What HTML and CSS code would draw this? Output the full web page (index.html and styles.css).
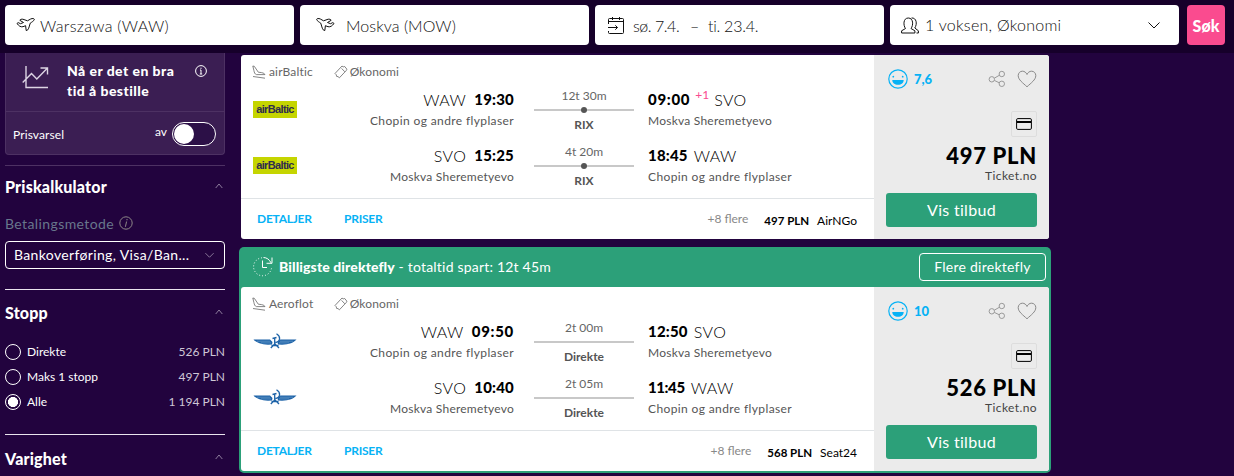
FILE: index.html
```html
<!DOCTYPE html>
<html lang="no">
<head>
<meta charset="utf-8">
<title>Warszawa – Moskva</title>
<link rel="stylesheet" href="styles.css">
</head>
<body>
<svg class="defs" width="0" height="0">
  <symbol id="i-plane" viewBox="0 0 20 16"><path d="M1 6.500 2.200 5.600 4.500 6.700 7.500 5.500 3.800 3.300 Q4.800 1.800 6.800 2.200L11.500 3.800 14.300 2.200C16 1.200 18.600 1.300 18.300 2.600 18 3.800 15.600 5.300 14.300 6.100 13.300 8.500 13.200 11.500 11.300 13.300L10.200 13.500 9.600 8.700 7 9.700C4.500 10.300 2.800 8.800 1 6.500Z"/></symbol>
  <symbol id="i-land" viewBox="0 0 14 14"><path d="M.8 1 2.300 1.300 6.300 7.200 9.500 7.600C11.500 8 12.900 8.800 12.900 9.600H4.500C2.800 9.200 2.300 7.500 1.900 5.500ZM1 11.500 13 13.200"/></symbol>
  <symbol id="i-ticket" viewBox="0 0 14 14"><path d="M1 8.500 8 1 9.200 1.900 10.700 1.500 12.900 4.200 12.200 5.600 5.400 12.800 4 11.600 2.600 11.400 2.300 9.800ZM7.600 3.400 10.800 6.800" /></symbol>
  <symbol id="i-face" viewBox="0 0 20 20"><circle cx="10" cy="10" r="9.200"/><path class="fill" d="M4.300 11h11.400c0 3-2.300 4.800-5.700 4.800S4.300 14 4.300 11Z"/><circle class="fill" cx="5.300" cy="7.700" r=".9"/><circle class="fill" cx="14.700" cy="7.700" r=".9"/></symbol>
  <symbol id="i-share" viewBox="0 0 18 18"><circle cx="3.800" cy="9.300" r="2.700"/><circle cx="13.800" cy="4" r="2.700"/><circle cx="13.800" cy="13.800" r="2.700"/><path d="M6.300 8.200 11.300 5.300M6.300 10.400 11.300 12.800"/></symbol>
  <symbol id="i-heart" viewBox="0 0 20 18"><path d="M10 16.800C6 13 1.200 9.800 1.200 5.600 1.200 3 3.100 1.200 5.400 1.200 7.500 1.200 9.200 2.500 10 4.500 10.800 2.500 12.500 1.200 14.600 1.200 16.900 1.200 18.800 3 18.800 5.600 18.800 9.800 14 13 10 16.800Z"/></symbol>
  <symbol id="i-up" viewBox="0 0 8 6"><path d="M.7 5 4 1 7.300 5"/></symbol>
  <symbol id="i-down" viewBox="0 0 12 8"><path d="M.5 1.500 6 7 11.500 1.500"/></symbol>
  <symbol id="i-card" viewBox="0 0 16 12"><rect x=".6" y=".6" width="14.800" height="10.800" rx="1.200"/><path d="M1 4h14" stroke-width="1.800"/></symbol>
  <symbol id="i-aeroflot" viewBox="0 0 44 16"><path d="M.5 6.500H17L19.500 9 19 11.500 15 11.800C8 11.500 3 9.500 .5 6.500ZM43.500 6.500H27L24.500 9 25 11.500 29 11.800C36 11.500 41 9.500 43.500 6.500Z"/><path class="wing" d="M4 8.200H17M8 9.900H18M40 8.200H27M36 9.900H26"/><path class="tool" d="M23.500 .8C28 3.500 27.500 8.500 22.500 9.500M19.500 5.500 23.500 4.500M21.700 5V11L17.800 15M22 11 26 15M18.500 12.500H25.500"/></symbol>
</svg>

<header class="search">
  <div class="field origin"><svg class="icon plane"><use href="#i-plane"/></svg><span class="t-origin">Warszawa (WAW)</span></div>
  <div class="field dest"><svg class="icon plane flip"><use href="#i-plane"/></svg><span class="t-dest">Moskva (MOW)</span></div>
  <div class="field dates">
    <svg class="icon cal" viewBox="0 0 16 17"><path d="M.5 7V2.500q0-1 1-1h13q1 0 1 1v13q0 1-1 1h-13q-1 0-1-1V14M.5 4.500h15M4.500 0v3M11.500 0v3M0 10.500h9.500M7.300 8.300l2.200 2.200-2.200 2.200"/></svg>
    <span class="t-date">sø. 7.4.</span><span class="dash">–</span><span class="t-date2">ti. 23.4.</span>
  </div>
  <div class="field pax">
    <svg class="icon people" viewBox="0 0 18 17"><path d="M.6 16V13.800L4.500 11.500C2.200 8.500 2 1 7.300 1S12.400 8.500 10 11.500L13.900 13.800V16ZM10.500 1C15.500 .5 16.500 7 13.800 11L17.400 13.800V16H15.500"/></svg>
    <span class="t-pax">1 voksen, Økonomi</span><svg class="icon chev"><use href="#i-down"/></svg>
  </div>
  <button class="go">Søk</button>
</header>

<main class="page">
  <aside class="side">
    <section class="advice">
      <div class="advice-top">
        <svg class="trend" viewBox="0 0 27 24"><path d="M4 1V22.500H26M.7 17.500 9.500 8.500 14.800 14 25 3.500M18.500 3H25.500V9.500"/></svg>
        <p class="advice-text">Nå er det en bra<br>tid å bestille</p>
        <svg class="info" viewBox="0 0 12 12"><circle cx="6" cy="6" r="5.400"/><path d="M6 5v4M6 2.700v1.200M5 5h1M4.800 9h2.400"/></svg>
      </div>
      <div class="advice-bottom"><span class="alert">Prisvarsel</span><span class="off">av</span><span class="toggle"><i></i></span></div>
    </section>
    <section class="block calc">
      <h2><span class="h-calc">Priskalkulator</span><svg class="up"><use href="#i-up"/></svg></h2>
      <div class="pay-label"><span>Betalingsmetode</span><svg class="info2" viewBox="0 0 14 14"><circle cx="7" cy="7" r="6.200"/><path d="M7.600 5.500 6.400 10.800M8 3v1.300"/></svg></div>
      <div class="select"><span>Bankoverføring, Visa/Ban...</span><svg class="down"><use href="#i-down"/></svg></div>
    </section>
    <section class="block stops">
      <h2><span class="h-stop">Stopp</span><svg class="up"><use href="#i-up"/></svg></h2>
      <ul>
        <li><i class="radio"></i><span class="o1">Direkte</span><b>526 PLN</b></li>
        <li><i class="radio"></i><span class="o2">Maks 1 stopp</span><b>497 PLN</b></li>
        <li><i class="radio on"></i><span class="o3">Alle</span><b>1 194 PLN</b></li>
      </ul>
    </section>
    <section class="block"><h2><span class="h-dur">Varighet</span><svg class="up"><use href="#i-up"/></svg></h2></section>
  </aside>

  <div class="results">
    <article class="card">
      <div class="trip">
        <div class="body">
          <div class="meta"><svg class="m1"><use href="#i-land"/></svg><span class="carrier">airBaltic</span><svg class="m2"><use href="#i-ticket"/></svg><span class="cabin">Økonomi</span></div>
          <div class="leg">
            <div class="baltic">airBaltic</div>
            <div class="dep"><p class="time"><span>WAW</span><b>19:30</b></p><p class="place chopin">Chopin og andre flyplaser</p></div>
            <div class="mid"><span class="dur">12t 30m</span><div class="line"><i></i></div><b class="via">RIX</b></div>
            <div class="arr"><p class="time"><b class="wide">09:00</b><sup>+1</sup><span>SVO</span></p><p class="place">Moskva Sheremetyevo</p></div>
          </div>
          <div class="leg">
            <div class="baltic">airBaltic</div>
            <div class="dep"><p class="time"><span>SVO</span><b>15:25</b></p><p class="place">Moskva Sheremetyevo</p></div>
            <div class="mid"><span class="dur">4t 20m</span><div class="line"><i></i></div><b class="via">RIX</b></div>
            <div class="arr"><p class="time"><b>18:45</b><span>WAW</span></p><p class="place chopin">Chopin og andre flyplaser</p></div>
          </div>
        </div>
        <div class="foot"><a class="det">DETALJER</a><a>PRISER</a><span class="more">+8 flere</span><b>497 PLN</b><span class="agent">AirNGo</span></div>
      </div>
      <div class="offer">
        <div class="rate"><svg class="face"><use href="#i-face"/></svg><b>7,6</b><svg class="share"><use href="#i-share"/></svg><svg class="heart"><use href="#i-heart"/></svg></div>
        <div class="cc"><svg><use href="#i-card"/></svg></div>
        <strong class="price">497 PLN</strong><span class="seller">Ticket.no</span>
        <button class="view">Vis tilbud</button>
      </div>
    </article>

    <div class="promo">
      <div class="promo-head">
        <svg class="clock" viewBox="0 0 22 22"><path class="dots" d="M10 1.800A9 9 0 1 0 19.500 12"/><path d="M10.500 4.500V11.500H15M11.500 1.500C14.500 1.500 17.500 3.500 19 6.800M20 1.500V7.300H14.500"/></svg>
        <p><b>Billigste direktefly</b><span> - totaltid spart: 12t 45m</span></p>
        <button>Flere direktefly</button>
      </div>
      <article class="card">
        <div class="trip">
          <div class="body">
            <div class="meta"><svg class="m1"><use href="#i-land"/></svg><span class="carrier">Aeroflot</span><svg class="m2"><use href="#i-ticket"/></svg><span class="cabin">Økonomi</span></div>
            <div class="leg">
              <svg class="aeroflot"><use href="#i-aeroflot"/></svg>
              <div class="dep"><p class="time"><span>WAW</span><b class="wide">09:50</b></p><p class="place chopin">Chopin og andre flyplaser</p></div>
              <div class="mid"><span class="dur">2t 00m</span><div class="line"></div><b class="via">Direkte</b></div>
              <div class="arr"><p class="time"><b>12:50</b><span>SVO</span></p><p class="place">Moskva Sheremetyevo</p></div>
            </div>
            <div class="leg">
              <svg class="aeroflot"><use href="#i-aeroflot"/></svg>
              <div class="dep"><p class="time"><span>SVO</span><b>10:40</b></p><p class="place">Moskva Sheremetyevo</p></div>
              <div class="mid"><span class="dur">2t 05m</span><div class="line"></div><b class="via">Direkte</b></div>
              <div class="arr"><p class="time"><b class="narrow">11:45</b><span>WAW</span></p><p class="place chopin">Chopin og andre flyplaser</p></div>
            </div>
          </div>
          <div class="foot"><a class="det">DETALJER</a><a>PRISER</a><span class="more">+8 flere</span><b>568 PLN</b><span class="agent">Seat24</span></div>
        </div>
        <div class="offer">
          <div class="rate"><svg class="face"><use href="#i-face"/></svg><b>10</b><svg class="share"><use href="#i-share"/></svg><svg class="heart"><use href="#i-heart"/></svg></div>
          <div class="cc"><svg><use href="#i-card"/></svg></div>
          <strong class="price">526 PLN</strong><span class="seller">Ticket.no</span>
          <button class="view">Vis tilbud</button>
        </div>
      </article>
    </div>
  </div>
</main>
</body>
</html>
```
FILE: styles.css
```css
* { box-sizing: border-box; margin: 0; padding: 0; }
html, body { height: 476px; overflow: hidden; }
body { background: #22033e; font-family: Lato, "Open Sans", sans-serif; font-size: 12px; color: #000; }
svg { display: block; flex: none; fill: none; stroke: currentColor; stroke-width: 1; }
.defs { position: absolute; }
button { border: 0; font-family: inherit; }
span, b, p, a { white-space: nowrap; }

/* search bar */
.search { height: 53px; padding: 5px 9px 8px 5px; display: flex; gap: 6px; background: #16002a; }
.field { height: 40px; background: #fff; border-radius: 4px; display: flex; align-items: center; font-size: 16px; font-weight: 300; color: #111; flex: none; }
.icon { color: #111; }
.origin, .dest, .dates, .pax { width: 289px; }
.origin { padding-left: 11px; }
.plane { width: 20px; height: 16px; }
.t-origin { margin-left: 4px; letter-spacing: .3px; }
.dest { padding-left: 15px; }
.t-dest { margin-left: 11px; letter-spacing: .05px; }
.plane.flip { transform: scaleX(-1); }
.dates { padding-left: 13px; }
.cal { width: 16px; height: 17px; }
.t-date { margin-left: 9px; width: 48px; letter-spacing: -.45px; }
.t-date2 { letter-spacing: -.25px; }
.dash { margin-left: 9px; width: 18px; }
.pax { padding-left: 11px; }
.people { width: 18px; height: 17px; }
.t-pax { margin-left: 6px; padding-bottom: 2px; letter-spacing: .25px; }
.chev { width: 12px; height: 8px; margin: 0 19px 0 auto; }
.go { width: 38px; height: 40px; margin-left: 2px; border-radius: 4px; background: #fa4b8f; color: #fff; font-size: 16px; font-weight: 900; }

.page { display: flex; }

/* filters */
.side { width: 220px; margin-left: 5px; color: #fff; flex: none; }
.advice { height: 102px; background: #3b1e53; border: 1px solid #4d3163; border-top: 0; border-radius: 0 0 4px 4px; margin-bottom: 10px; }
.advice-top { height: 59px; display: flex; border-bottom: 1px solid #4d3163; }
.trend { width: 27px; height: 24px; margin: 12px 0 0 16px; stroke-width: 1.4; color: #ddd5e4; }
.advice-text { margin: 8px 0 0 18px; width: 110px; font-size: 14px; line-height: 20px; font-weight: 900; letter-spacing: .45px; }
.info { width: 12px; height: 12px; margin: 12px 0 0 18px; }
.advice-bottom { height: 42px; display: flex; align-items: center; font-size: 12px; }
.alert { margin: 2px 0 0 7px; width: 142px; letter-spacing: .1px; }
.off { width: 17px; margin-top: -4px; }
.toggle { width: 44px; height: 24px; margin-top: 1px; border: 1px solid #fff; border-radius: 12px; padding: 1px; background: #2c1047; }
.toggle i { display: block; width: 20px; height: 20px; border-radius: 50%; background: #fff; }
.block { border-top: 1px solid #e9e4ed; }
.calc { height: 124px; border-top-color: #4d3163; }
h2 { height: 45px; display: flex; justify-content: space-between; align-items: center; padding-right: 2px; font-size: 16px; font-weight: 900; letter-spacing: .18px; }
.calc h2 { height: 41px; }
.h-dur { padding-top: 1px; }
.up { width: 8px; height: 6px; margin-top: -2px; stroke-width: .8; color: #a99cb5; }
.pay-label { height: 34px; padding-bottom: 2px; display: flex; align-items: center; gap: 5px; font-size: 14px; letter-spacing: .4px; color: #68778c; }
.info2 { width: 14px; height: 14px; color: #8d8787; }
.select { height: 28px; border: 1px solid #fff; border-radius: 4px; padding: 0 10px 1px 8px; display: flex; align-items: center; justify-content: space-between; font-size: 14px; letter-spacing: .35px; }
.down { width: 9px; height: 6px; color: #a99cb5; }
.stops { height: 145px; }
ul { list-style: none; padding-top: 4px; }
li { height: 25px; display: flex; align-items: center; font-size: 12px; }
li span { margin-top: -1px; }
li b { margin: -1px 0 0 auto; font-weight: 400; color: #cfc7d6; }
.radio { width: 16px; height: 16px; border: 1px solid #fff; border-radius: 50%; margin-right: 6px; }
.radio.on { background: radial-gradient(#fff 0 4.800px, transparent 5.300px); }

/* results */
.results { margin-left: 14px; width: 812px; padding-top: 2px; }
.card { width: 808px; height: 184px; margin: 0 auto; display: flex; background: #fff; border-radius: 3px; overflow: hidden; }
.trip { width: 633px; }
.body { height: 144px; border-bottom: 1px solid #dfe3e6; padding-left: 11px; overflow: hidden; }
.meta { width: 147px; height: 34px; display: flex; align-items: center; color: #666; }
.meta span { padding-bottom: 1px; letter-spacing: .15px; }
.meta svg { width: 14px; height: 14px; stroke-width: .8; }
.meta .m2 { margin-left: auto; }
.carrier { margin-left: 3px; }
.cabin { margin-left: 2px; }
.leg { height: 56px; margin-left: 1px; display: grid; grid-template-columns: 44px 217px 20px 100px 14px 200px; }
.baltic { height: 17px; margin-top: 12px; background: #c5d500; color: #2e2c4e; font: 700 11px/17px "Liberation Sans", sans-serif; letter-spacing: -.65px; text-align: center; }
.aeroflot { width: 44px; height: 16px; margin-top: 12px; stroke: none; fill: #1d63a8; }
.wing { stroke: #8fb6d9; stroke-width: .5; }
.tool { fill: none; stroke: #1d63a8; stroke-width: 1.300; }
.dep { grid-column: 2; display: flex; flex-direction: column; align-items: flex-end; }
.time { display: flex; height: 22px; line-height: 21px; font-size: 15px; color: #000; }
.time b { font-weight: 900; letter-spacing: .2px; }
.time .wide { letter-spacing: .7px; }
.time .narrow { letter-spacing: -.4px; }
.time span { font-weight: 300; font-size: 16px; letter-spacing: .4px; }
.dep .time span { margin-right: 8px; }
.arr { grid-column: 6; }
.arr .time span { margin-left: 6px; }
sup { font-size: 12px; line-height: 11px; color: #fa4b8f; margin-left: 5px; }
sup + span { margin-left: 5px !important; }
.place { line-height: 20px; color: #555; letter-spacing: .23px; }
.chopin { letter-spacing: .38px; }
.mid { grid-column: 4; display: flex; flex-direction: column; align-items: center; color: #555; }
.dur { line-height: 14px; height: 20px; color: #666; }
.line { width: 100%; height: 2px; background: #c8c8c8; display: flex; justify-content: center; align-items: center; }
.line i { width: 6px; height: 6px; flex: none; border-radius: 50%; background: #555; }
.via { line-height: 16px; margin-top: 6px; font-size: 12px; font-weight: 700; }
.foot { height: 40px; padding: 0 17px 1px 16px; display: flex; align-items: center; }
.foot a { color: #07b2f5; width: 87px; font-weight: 700; letter-spacing: -.25px; }
.more { margin-left: auto; color: #888; }
.foot b { margin: 4px 8px 0 16px; font-size: 11.500px; }
.agent { margin-top: 4px; }
.offer { width: 175px; background: #ebebeb; padding: 12px 12px 0; display: flex; flex-direction: column; align-items: flex-end; }
.rate { width: 151px; height: 24px; display: flex; align-items: center; }
.face { width: 20px; height: 20px; margin: 0 6px 0 2px; color: #07b2f5; stroke-width: 1.200; }
.fill { fill: #07b2f5; stroke: none; }
.rate b { color: #07b2f5; font-size: 13px; font-weight: 900; }
.share { width: 18px; height: 18px; margin: 0 11px 0 auto; color: #999; }
.heart { width: 20px; height: 18px; color: #888; }
.cc { width: 26px; height: 26px; margin-top: 20px; border: 1px solid #ddd; border-radius: 2px; display: flex; align-items: center; justify-content: center; }
.cc svg { width: 16px; height: 12px; color: #000; }
.price { font-size: 22px; line-height: 30px; height: 30px; margin-top: 4px; font-weight: 900; letter-spacing: .7px; }
.seller { line-height: 14px; height: 22px; margin-top: -2px; color: #444; letter-spacing: .4px; }
.view { width: 151px; height: 34px; margin-top: 2px; padding-bottom: 1px; border-radius: 3px; background: #2ca079; color: #fff; font-size: 16px; letter-spacing: .3px; }
.promo { width: 812px; height: 226px; margin-top: 8px; background: #2ca079; border-radius: 5px; }
.promo-head { height: 40px; padding: 0 5px 0 13px; display: flex; align-items: center; color: #fff; font-size: 14px; }
.promo-head p { padding-bottom: 1px; }
.promo-head span { letter-spacing: .2px; }
.clock { width: 22px; height: 22px; margin-right: 5px; }
.dots { stroke-dasharray: 1 2; }
.promo-head b { font-weight: 900; font-size: 14px; letter-spacing: .1px; }
.promo-head button { width: 127px; height: 28px; margin-left: auto; padding-bottom: 1px; border: 1px solid #fff; border-radius: 4px; background: none; color: #fff; font-size: 14px; letter-spacing: .25px; }
```
